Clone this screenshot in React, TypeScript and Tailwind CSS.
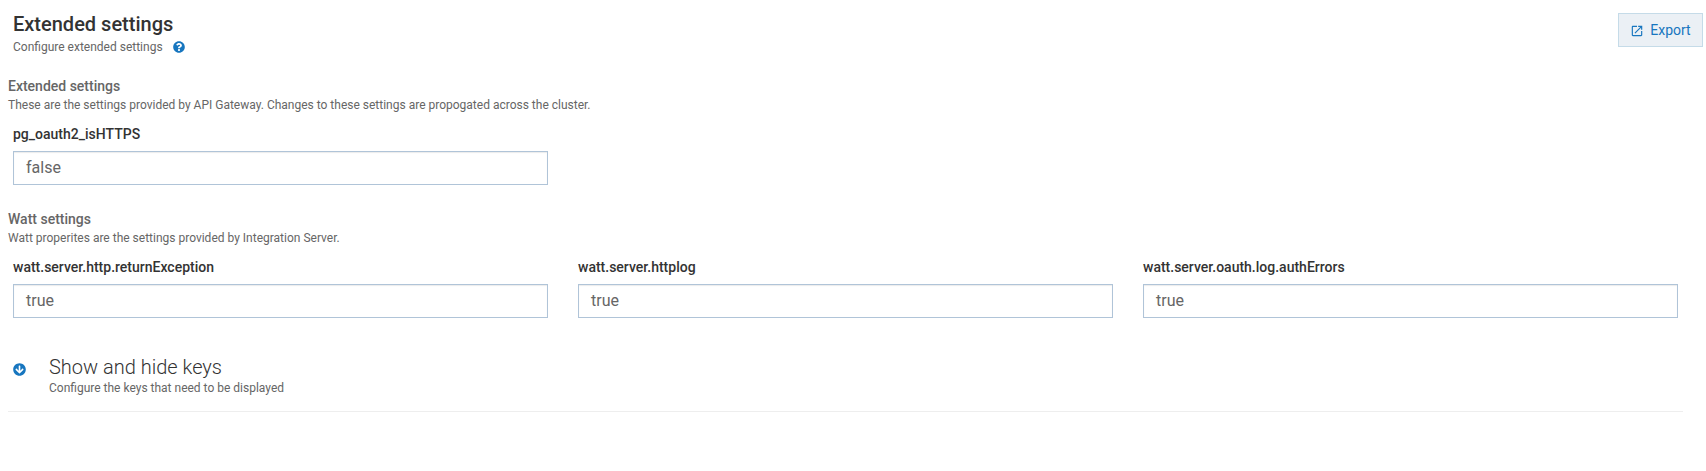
import { FaArrowCircleDown, FaQuestionCircle } from 'react-icons/fa'

function Campo({ label, valor }: { label: string; valor: string }) {
    return (
        <div className="w-[535px]">
            <div className="mb-[7px] text-[14px] leading-[20px] font-medium text-[#333333]">{label}</div>
            <div className="flex h-[34px] items-center border border-[#b0c4d8] bg-white pl-3 text-[16px] text-[#666666] shadow-[inset_0_1px_1px_rgba(0,0,0,0.08)]">
                {valor}
            </div>
        </div>
    )
}

function Seccion({ titulo, descripcion }: { titulo: string; descripcion: string }) {
    return (
        <div className="pl-2">
            <div className="text-[14px] leading-[20px] font-medium text-[#666666]">{titulo}</div>
            <div className="mt-[1px] text-[12px] leading-[17px] text-[#666666]">{descripcion}</div>
        </div>
    )
}

export default function App() {
    return (
        <div className="h-[471px] w-[1706px] overflow-hidden bg-white font-['Roboto',sans-serif]">
            <div className="flex items-start justify-between pt-[12px] pr-[3px] pl-[13px]">
                <div>
                    <div className="text-[20px] leading-[24px] font-medium text-[#333333]">Extended settings</div>
                    <div className="mt-[2px] flex items-center text-[12px] leading-[18px] text-[#666666]">
                        Configure extended settings
                        <FaQuestionCircle className="ml-[10px] text-[12px] text-[#1776bf]" />
                    </div>
                </div>
                <button className="mt-[1px] flex h-[34px] w-[85px] items-center justify-center gap-[6px] border border-[#c5dbe8] bg-[#ebf0f5] pt-[1px] text-[14px] text-[#1776bf]">
                    <svg viewBox="0 0 24 24" className="h-[14px] w-[14px] fill-current">
                        <path d="M19 19H5V5h7V3H5c-1.11 0-2 .9-2 2v14c0 1.1.89 2 2 2h14c1.1 0 2-.9 2-2v-7h-2v7zM14 3v2h3.59l-9.83 9.83 1.41 1.41L19 6.41V10h2V3h-7z" />
                    </svg>
                    Export
                </button>
            </div>

            <div className="mt-[20px]">
                <Seccion
                    titulo="Extended settings"
                    descripcion="These are the settings provided by API Gateway. Changes to these settings are propogated across the cluster."
                />
                <div className="mt-[10px] pl-[13px]">
                    <Campo label="pg_oauth2_isHTTPS" valor="false" />
                </div>
            </div>

            <div className="mt-[24px]">
                <Seccion
                    titulo="Watt settings"
                    descripcion="Watt properites are the settings provided by Integration Server."
                />
                <div className="mt-[10px] flex gap-[30px] pl-[13px]">
                    <Campo label="watt.server.http.returnException" valor="true" />
                    <Campo label="watt.server.httplog" valor="true" />
                    <Campo label="watt.server.oauth.log.authErrors" valor="true" />
                </div>
            </div>

            <div className="mt-[37px] ml-2 flex h-[57px] w-[1675px] items-start border-b border-[#eeeeee]">
                <FaArrowCircleDown className="mt-[8px] ml-[5px] text-[13px] text-[#1776bf]" />
                <div className="ml-[23px]">
                    <div className="text-[20px] leading-[24px] font-light text-[#333333]">Show and hide keys</div>
                    <div className="text-[12px] leading-[18px] text-[#666666]">Configure the keys that need to be displayed</div>
                </div>
            </div>
        </div>
    )
}
